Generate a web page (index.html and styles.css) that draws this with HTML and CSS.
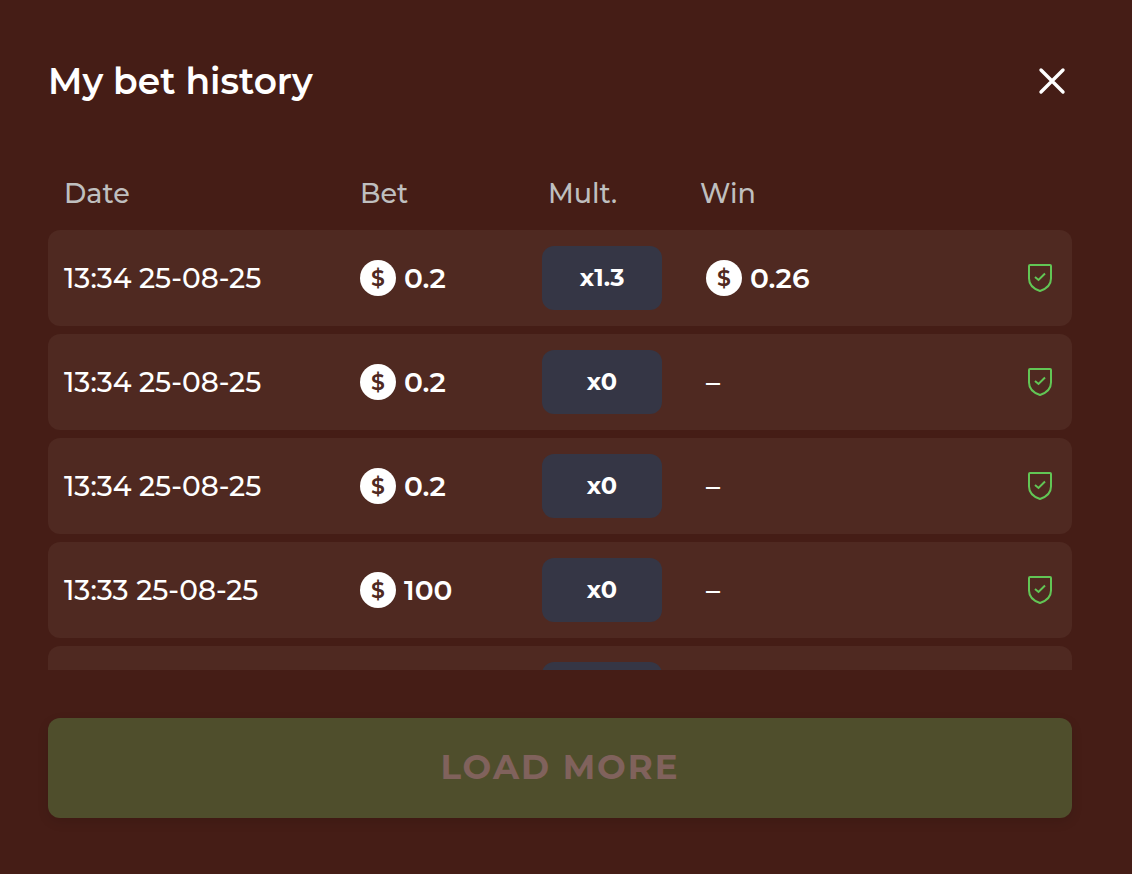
FILE: index.html
```html
<!DOCTYPE html>
<html lang="en">

<head>
    <meta charset="UTF-8">
    <meta name="viewport" content="width=device-width, initial-scale=1.0">
    <title>My bet history</title>
    <link rel="stylesheet" href="styles.css">
</head>

<body>
    <!-- Shared icons -->
    <svg class="sprite" aria-hidden="true">
        <symbol id="icon-shield" viewBox="0 0 26 30">
            <path d="M3 2H23Q24 2 24 3V15.500C24 22.500 19 26 13 28C7 26 2 22.500 2 15.500V3Q2 2 3 2Z" />
            <path d="M8 14L11.500 17L18 10.500" />
        </symbol>
    </svg>

    <main class="modal">
        <header class="modal-header">
            <h1>My bet history</h1>
            <button class="close-button" aria-label="Close">
                <svg viewBox="0 0 28 28">
                    <path d="M3 3L25 25M25 3L3 25" />
                </svg>
            </button>
        </header>

        <div class="history">
            <table>
                <thead>
                    <tr>
                        <th class="date">Date</th>
                        <th class="bet">Bet</th>
                        <th class="mult">Mult.</th>
                        <th class="win">Win</th>
                        <th class="check"></th>
                    </tr>
                </thead>
                <tbody>
                    <tr>
                        <td class="date">13:34 25-08-25</td>
                        <td class="bet"><span class="amount"><span class="coin">$</span>0.2</span></td>
                        <td class="mult"><span class="badge">x1.3</span></td>
                        <td class="win"><span class="amount"><span class="coin">$</span>0.26</span></td>
                        <td class="check"><a href="#" aria-label="Fairness check"><svg class="shield"><use href="#icon-shield" /></svg></a></td>
                    </tr>
                    <tr>
                        <td class="date">13:34 25-08-25</td>
                        <td class="bet"><span class="amount"><span class="coin">$</span>0.2</span></td>
                        <td class="mult"><span class="badge">x0</span></td>
                        <td class="win">–</td>
                        <td class="check"><a href="#" aria-label="Fairness check"><svg class="shield"><use href="#icon-shield" /></svg></a></td>
                    </tr>
                    <tr>
                        <td class="date">13:34 25-08-25</td>
                        <td class="bet"><span class="amount"><span class="coin">$</span>0.2</span></td>
                        <td class="mult"><span class="badge">x0</span></td>
                        <td class="win">–</td>
                        <td class="check"><a href="#" aria-label="Fairness check"><svg class="shield"><use href="#icon-shield" /></svg></a></td>
                    </tr>
                    <tr>
                        <td class="date">13:33 25-08-25</td>
                        <td class="bet"><span class="amount"><span class="coin">$</span>100</span></td>
                        <td class="mult"><span class="badge">x0</span></td>
                        <td class="win">–</td>
                        <td class="check"><a href="#" aria-label="Fairness check"><svg class="shield"><use href="#icon-shield" /></svg></a></td>
                    </tr>
                    <tr>
                        <td class="date"></td>
                        <td class="bet"></td>
                        <td class="mult"><span class="badge"></span></td>
                        <td class="win"></td>
                        <td class="check"></td>
                    </tr>
                </tbody>
            </table>
        </div>

        <button class="load-more" disabled>LOAD MORE</button>
    </main>
</body>

</html>
```

FILE: styles.css
```css
* {
    box-sizing: border-box;
}

body {
    margin: 0;
    background-color: #451d16;
    color: #fff;
    font-family: Montserrat, Inter, sans-serif;
}

.sprite {
    display: none;
}

.modal {
    display: flex;
    flex-direction: column;
    height: 100vh;
    padding: 56px 60px 56px 48px;
}

.modal-header {
    display: flex;
    justify-content: space-between;
    align-items: center;
    height: 50px;
    flex-shrink: 0;
    margin-bottom: 48px;
}

h1 {
    margin: 0;
    font-size: 36px;
    line-height: 50px;
    font-weight: 600;
}

.close-button {
    display: flex;
    padding: 6px;
    border: none;
    background: none;
    cursor: pointer;
}

.close-button svg {
    width: 28px;
    height: 28px;
    fill: none;
    stroke: #fff;
    stroke-width: 3.4;
    stroke-linecap: round;
}

/* Only the list scrolls, the header and the button stay in place */
.history {
    flex: 1;
    min-height: 0;
    overflow-y: auto;
    scrollbar-width: none;
}

table {
    width: 100%;
    table-layout: fixed;
    border-collapse: separate;
    border-spacing: 0 8px;
}

th {
    height: 60px;
    padding: 2px 16px 0;
    color: #bfbfbf;
    font-size: 27px;
    font-weight: 500;
    text-align: left;
}

td {
    height: 96px;
    padding: 0 16px;
    background-color: #4f2921;
    font-size: 28px;
    font-weight: 500;
    white-space: nowrap;
}

td:first-child {
    border-radius: 12px 0 0 12px;
}

td:last-child {
    border-radius: 0 12px 12px 0;
}

th.date {
    width: 296px;
}

th.bet {
    width: 182px;
}

th.mult {
    width: 158px;
    padding-left: 22px;
}

th.check {
    width: 64px;
}

td.win {
    padding-left: 22px;
}

td.check {
    padding: 0 19px;
}

.amount {
    display: flex;
    align-items: center;
    gap: 8px;
    font-weight: 600;
}

.coin {
    width: 36px;
    height: 36px;
    border-radius: 50%;
    background-color: #fff;
    color: #4f2921;
    font-size: 22px;
    line-height: 38px;
    text-align: center;
}

.badge {
    display: flex;
    justify-content: center;
    align-items: center;
    width: 120px;
    height: 64px;
    padding-bottom: 2px;
    border-radius: 12px;
    background-color: #353645;
    font-size: 24px;
    font-weight: 700;
}

.shield {
    display: block;
    width: 26px;
    height: 30px;
    fill: none;
    stroke: #62c655;
    stroke-width: 2;
}

.load-more {
    flex-shrink: 0;
    height: 100px;
    margin-top: 48px;
    padding-bottom: 4px;
    border: none;
    border-radius: 12px;
    background-color: #4f4e2c;
    box-shadow: 0 4px 12px rgba(0, 0, 0, 0.1);
    color: #80625c;
    font-family: inherit;
    font-size: 34px;
    font-weight: 700;
    letter-spacing: 2px;
}
```
